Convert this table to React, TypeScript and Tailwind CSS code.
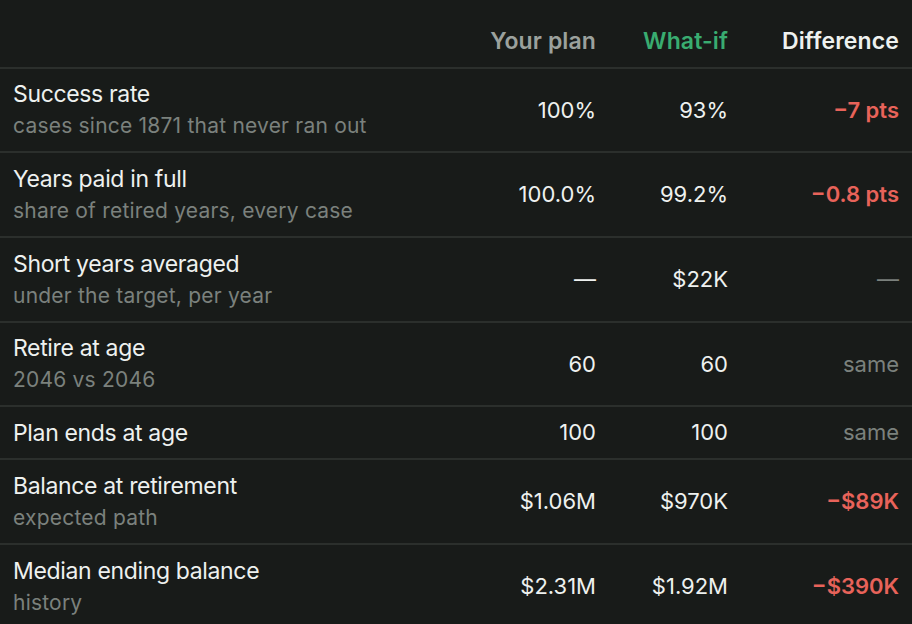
import React from "react";

type Row = {
  title: string;
  sub?: string;
  plan: string;
  whatIf: string;
  diff: string;
  tone: "bad" | "muted";
  h: string;
};

const rows: Row[] = [
  { title: "Success rate", sub: "cases since 1871 that never ran out", plan: "100%", whatIf: "93%", diff: "−7 pts", tone: "bad", h: "h-[84px]" },
  { title: "Years paid in full", sub: "share of retired years, every case", plan: "100.0%", whatIf: "99.2%", diff: "−0.8 pts", tone: "bad", h: "h-[85px]" },
  { title: "Short years averaged", sub: "under the target, per year", plan: "—", whatIf: "$22K", diff: "—", tone: "muted", h: "h-[85px]" },
  { title: "Retire at age", sub: "2046 vs 2046", plan: "60", whatIf: "60", diff: "same", tone: "muted", h: "h-[84px]" },
  { title: "Plan ends at age", plan: "100", whatIf: "100", diff: "same", tone: "muted", h: "h-[53px]" },
  { title: "Balance at retirement", sub: "expected path", plan: "$1.06M", whatIf: "$970K", diff: "−$89K", tone: "bad", h: "h-[85px]" },
  { title: "Median ending balance", sub: "history", plan: "$2.31M", whatIf: "$1.92M", diff: "−$390K", tone: "bad", h: "h-[85px]" },
];

export default function App() {
  return (
    <div
      className="w-[912px] h-[624px] overflow-hidden bg-[#181b19] text-[#eef1ef]"
      style={{ fontFamily: "Inter, 'Noto Sans', sans-serif" }}
    >
      <div className="grid grid-cols-[1fr_150px_132px_171px] items-center h-[69px] pl-[13px] pr-[13px] pt-[16px] border-b-2 border-[#2b2f2c] text-[23px] font-semibold tracking-[0.005em]">
        <div />
        <div className="text-right text-[#9ba19d]">Your plan</div>
        <div className="text-right text-[#39ac70]">What-if</div>
        <div className="text-right text-[#eef1ef]">Difference</div>
      </div>
      {rows.map((r) => (
        <div
          key={r.title}
          className={`grid grid-cols-[1fr_150px_132px_171px] items-center pl-[13px] pr-[13px] border-b-2 border-[#2b2f2c] ${r.h}`}
        >
          <div className="flex flex-col">
            <div className="text-[23px] leading-[32px] tracking-[-0.015em] text-[#eef1ef]">{r.title}</div>
            {r.sub && (
              <div className="text-[21px] leading-[32px] tracking-[0.01em] text-[#7b817d]">{r.sub}</div>
            )}
          </div>
          <div className="text-right text-[22px] text-[#eef1ef]">{r.plan}</div>
          <div className="text-right text-[22px] text-[#eef1ef]">{r.whatIf}</div>
          <div
            className={`text-right text-[22px] ${
              r.tone === "bad" ? "font-semibold text-[#e8635a]" : "text-[#7b817d]"
            }`}
          >
            {r.diff}
          </div>
        </div>
      ))}
    </div>
  );
}
